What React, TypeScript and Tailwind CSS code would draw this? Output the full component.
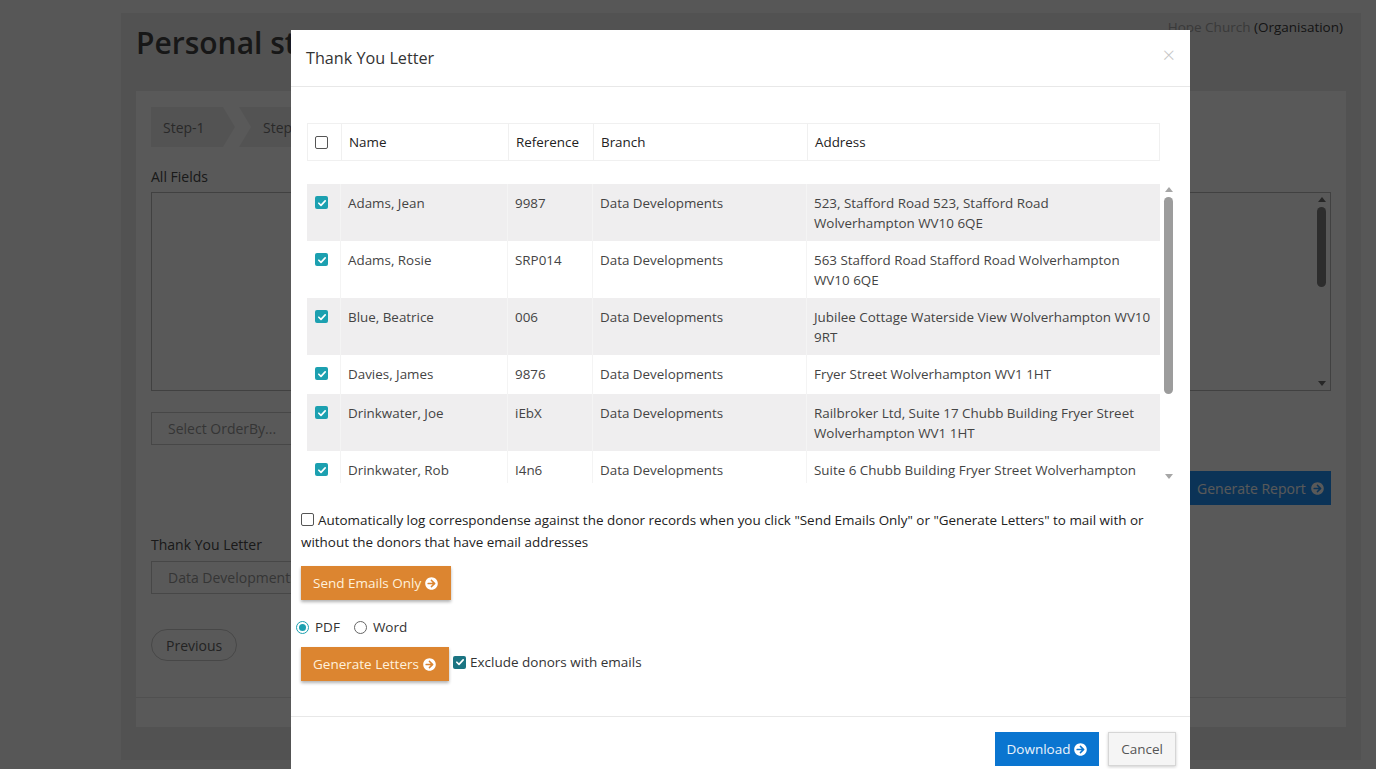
import React from "react";
import { FaArrowCircleRight } from "react-icons/fa";

type Donor = {
  name: string;
  reference: string;
  branch: string;
  address: string[];
};

const donors: Donor[] = [
  { name: "Adams, Jean", reference: "9987", branch: "Data Developments", address: ["523, Stafford Road 523, Stafford Road", "Wolverhampton WV10 6QE"] },
  { name: "Adams, Rosie", reference: "SRP014", branch: "Data Developments", address: ["563 Stafford Road Stafford Road Wolverhampton", "WV10 6QE"] },
  { name: "Blue, Beatrice", reference: "006", branch: "Data Developments", address: ["Jubilee Cottage Waterside View Wolverhampton WV10", "9RT"] },
  { name: "Davies, James", reference: "9876", branch: "Data Developments", address: ["Fryer Street Wolverhampton WV1 1HT"] },
  { name: "Drinkwater, Joe", reference: "iEbX", branch: "Data Developments", address: ["Railbroker Ltd, Suite 17 Chubb Building Fryer Street", "Wolverhampton WV1 1HT"] },
  { name: "Drinkwater, Rob", reference: "I4n6", branch: "Data Developments", address: ["Suite 6 Chubb Building Fryer Street Wolverhampton", "WV1 1HT"] },
];

const Tick = ({ color = "bg-[#1ca0b0]" }: { color?: string }) => (
  <span className={`inline-flex h-[13px] w-[13px] items-center justify-center rounded-[2px] ${color}`}>
    <svg viewBox="0 0 12 12" className="h-[10px] w-[10px]">
      <path d="M2.2 6.3 L4.8 8.8 L9.8 3.4" fill="none" stroke="white" strokeWidth="2" strokeLinecap="round" strokeLinejoin="round" />
    </svg>
  </span>
);

const EmptyBox = () => (
  <span className="inline-block h-[13px] w-[13px] rounded-[2px] border border-[#555] bg-white" />
);

const Scrollbar = ({ thumb, arrow, thumbH }: { thumb: string; arrow: string; thumbH: string }) => (
  <div className="flex h-full w-[13px] flex-col items-center">
    <span className={`mt-[4px] h-0 w-0 border-x-[4px] border-b-[5px] border-x-transparent ${arrow}`} />
    <span className={`mt-[5px] w-[9px] rounded-full ${thumb} ${thumbH}`} />
    <span className="flex-1" />
    <span className={`mb-[4px] h-0 w-0 border-x-[4px] border-t-[5px] border-x-transparent ${arrow}`} />
  </div>
);

const OrangeButton = ({ label, w }: { label: string; w: string }) => (
  <button className={`flex h-[34px] ${w} items-center gap-[4px] bg-[#dc8530] pl-[12px] text-[13.5px] text-[#fff1dc] shadow-[0_2px_3px_rgba(0,0,0,0.3)]`}>
    {label}
    <FaArrowCircleRight className="h-[13px] w-[13px] text-white" />
  </button>
);

const App: React.FC = () => {
  return (
    <div className="relative h-[769px] w-full overflow-hidden bg-[#f9f9f9] font-['Open_Sans',sans-serif]">
      {/* underlying page */}
      <div className="ml-[121px] mt-[13px] h-[747px] w-[1240px] bg-[#eaeaea] px-[15px]">
        <div className="flex h-[78px] items-start justify-between">
          <h1 className="mt-[11px] text-[30px] font-semibold leading-[38px] text-[#444]">
            Personal statements
          </h1>
          <div className="mr-[3px] mt-[5px] text-[13.5px] leading-[18px] text-[#a5a5a5]">
            Hope Church <span className="text-[#3c3c3c]">(Organisation)</span>
          </div>
        </div>

        <div className="flex h-[636px] flex-col bg-white">
          <div className="flex flex-col px-[15px]">
            <div className="mt-[16px] flex h-[40px] gap-[4px]">
              <div className="flex w-[84px] items-center bg-[#eeeeee] pl-[12px] text-[14px] text-[#777] [clip-path:polygon(0_0,calc(100%-12px)_0,100%_50%,calc(100%-12px)_100%,0_100%)]">
                Step-1
              </div>
              <div className="flex w-[150px] items-center bg-[#eeeeee] pl-[24px] text-[14px] text-[#777] [clip-path:polygon(0_0,calc(100%-12px)_0,100%_50%,calc(100%-12px)_100%,0_100%,12px_50%)]">
                Step-2
              </div>
            </div>

            <div className="mt-[21px] text-[14px] leading-[18px] text-[#4a4a4a]">All Fields</div>
            <div className="mt-[6px] flex h-[199px] justify-end border border-[#bbb] pr-[2px]">
              <Scrollbar thumb="bg-[#808080]" arrow="border-b-[#707070] border-t-[#707070]" thumbH="h-[80px]" />
            </div>

            <div className="mt-[21px] flex h-[33px] w-[420px] items-center border border-[#ccc] pl-[16px] text-[14px] text-[#999]">
              Select OrderBy...
            </div>

            <div className="mt-[26px] flex justify-end">
              <button className="flex h-[34px] w-[147px] items-center gap-[5px] bg-[#2193f8] pl-[13px] text-[14px] text-white">
                Generate Report
                <FaArrowCircleRight className="h-[13px] w-[13px]" />
              </button>
            </div>

            <div className="mt-[31px] text-[14px] leading-[18px] text-[#4a4a4a]">Thank You Letter</div>
            <div className="mt-[7px] flex h-[33px] w-[420px] items-center border border-[#ccc] pl-[16px] text-[14px] text-[#999]">
              Data Developments
            </div>

            <div className="mt-[35px]">
              <button className="h-[32px] rounded-full border border-[#ccc] px-[14px] text-[14px] text-[#666]">
                Previous
              </button>
            </div>
          </div>
          <div className="mt-[36px] h-[30px] border-t border-[#e6e6e6]" />
        </div>
      </div>

      {/* backdrop */}
      <div className="absolute inset-0 bg-black/65" />

      {/* modal */}
      <div className="absolute left-[291px] top-[30px] w-[899px] bg-white">
        <div className="flex h-[57px] items-center justify-between border-b border-[#e8e8e8] pl-[15px] pr-[15px]">
          <span className="text-[16.2px] text-[#333]">Thank You Letter</span>
          <span className="-mt-[9px] text-[22px] font-light leading-none text-[#c6c6c6]">×</span>
        </div>

        <div className="px-[10px] pb-[35px] pt-[36px]">
          <div className="ml-[6px] w-[853px]">
            <div className="grid h-[38px] grid-cols-[33px_167px_85px_214px_354px] border border-[#f0f0f0] text-[13.4px] text-[#222]">
              <div className="flex items-center pl-[7px]">
                <EmptyBox />
              </div>
              <div className="flex items-center border-l border-[#f0f0f0] pl-[7px]">Name</div>
              <div className="flex items-center border-l border-[#f0f0f0] pl-[7px]">Reference</div>
              <div className="flex items-center border-l border-[#f0f0f0] pl-[7px]">Branch</div>
              <div className="flex items-center border-l border-[#f0f0f0] pl-[7px]">Address</div>
            </div>
          </div>

          <div className="ml-[6px] mt-[22px] flex h-[300px]">
            <div className="w-[853px] overflow-hidden pt-[1px]">
              {donors.map((d, i) => (
                <div
                  key={d.name}
                  className={`grid grid-cols-[33px_167px_85px_214px_354px] text-[13.4px] leading-[20px] text-[#444] ${
                    d.address.length > 1 ? "h-[57px]" : "h-[39px]"
                  } ${i % 2 === 0 ? "bg-[#efeeef]" : "bg-white"}`}
                >
                  <div className="flex pl-[8px] pt-[12px]">
                    <Tick />
                  </div>
                  <div className="border-l border-[#f4f4f4] pl-[7px] pt-[9px]">{d.name}</div>
                  <div className="border-l border-[#f4f4f4] pl-[7px] pt-[9px]">{d.reference}</div>
                  <div className="border-l border-[#f4f4f4] pl-[7px] pt-[9px]">{d.branch}</div>
                  <div className="border-l border-[#f4f4f4] pl-[7px] pt-[9px]">
                    {d.address.map((line) => (
                      <div key={line}>{line}</div>
                    ))}
                  </div>
                </div>
              ))}
            </div>
            <div className="ml-[2px]">
              <Scrollbar thumb="bg-[#9c9c9c]" arrow="border-b-[#a6a6a6] border-t-[#a6a6a6]" thumbH="h-[197px]" />
            </div>
          </div>

          <div className="mt-[27px] text-[13.45px] leading-[21px] text-[#222]">
            <span className="mr-[4px] inline-block align-[-1px]">
              <EmptyBox />
            </span>
            Automatically log correspondense against the donor records when you click "Send Emails Only" or "Generate Letters" to mail with or without the donors that have email addresses
          </div>

          <div className="mt-[13px]">
            <OrangeButton label="Send Emails Only" w="w-[150px]" />
          </div>

          <div className="mt-[17px] flex h-[20px] items-center text-[13.5px] text-[#333]">
            <span className="ml-[-5px] flex h-[13px] w-[13px] items-center justify-center rounded-full border border-[#1ca0b0]">
              <span className="h-[7px] w-[7px] rounded-full bg-[#1ca0b0]" />
            </span>
            <span className="ml-[6px]">PDF</span>
            <span className="ml-[14px] h-[13px] w-[13px] rounded-full border border-[#666]" />
            <span className="ml-[6px]">Word</span>
          </div>

          <div className="mt-[10px] flex items-start">
            <OrangeButton label="Generate Letters" w="w-[148px]" />
            <span className="ml-[4px] mt-[5px] flex items-center text-[13.5px] text-[#333]">
              <Tick color="bg-[#1b7482]" />
              <span className="ml-[4px]">Exclude donors with emails</span>
            </span>
          </div>
        </div>

        <div className="flex justify-end gap-[9px] border-t border-[#e8e8e8] px-[14px] pb-[15px] pt-[15px]">
          <button className="flex h-[34px] w-[104px] items-center justify-center gap-[4px] bg-[#0a75d0] text-[13.5px] text-[#eaf3fb]">
            Download
            <FaArrowCircleRight className="h-[13px] w-[13px] text-white" />
          </button>
          <button className="h-[34px] w-[68px] border border-[#d6d6d6] bg-[#f5f5f5] text-[13.5px] text-[#555] shadow-[0_1px_3px_rgba(0,0,0,0.2)]">
            Cancel
          </button>
        </div>
      </div>
    </div>
  );
};

export default App;
